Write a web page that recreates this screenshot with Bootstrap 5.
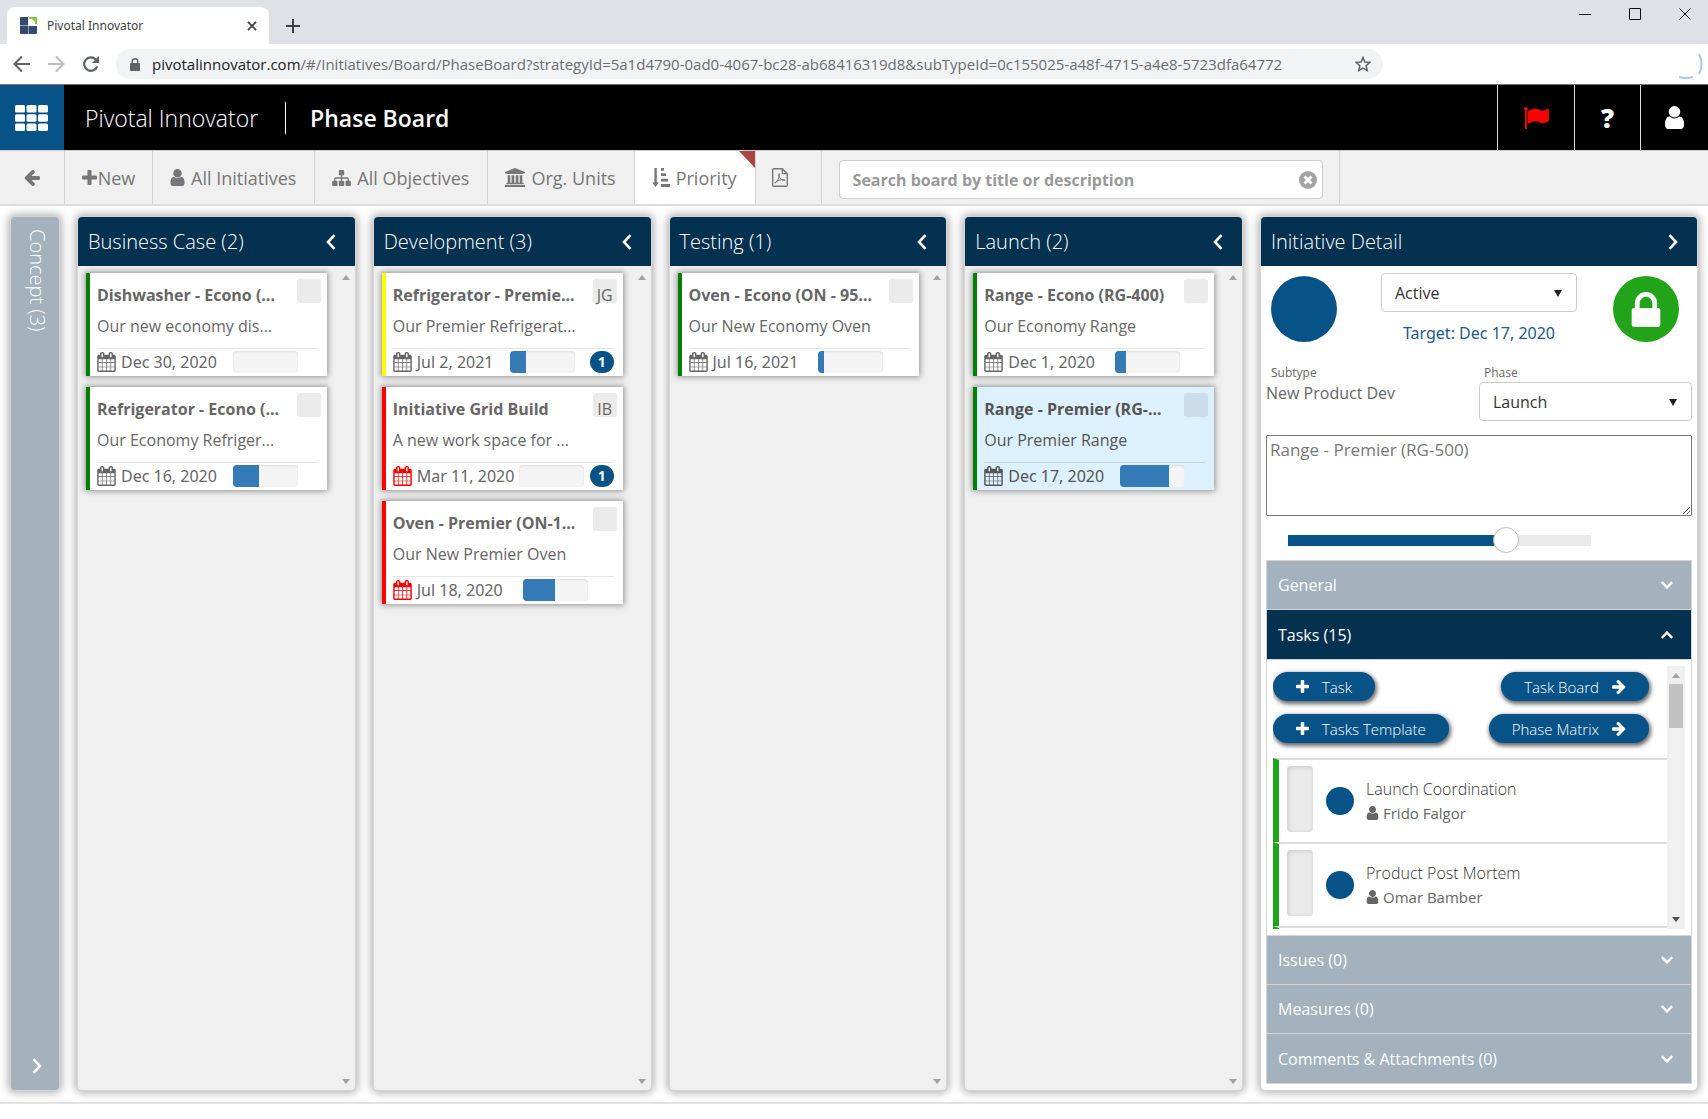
<!DOCTYPE html>
<html lang="en">
<head>
<meta charset="utf-8">
<meta name="viewport" content="width=device-width, initial-scale=1">
<title>Pivotal Innovator</title>
<link href="https://cdn.jsdelivr.net/npm/bootstrap@5.3.0/dist/css/bootstrap.min.css" rel="stylesheet">
<style>
:root { --navy: #053150; --blue: #075387; --slate: #a3b2bd; --ink: #666; --edge: #d4d4d4; }
body { font-family: "Open Sans", "Noto Sans", sans-serif; font-size: 16px; line-height: 22px; color: var(--ink); background: #fff; }
svg { display: block; flex: none; fill: currentColor; }
button { font: inherit; }
.plain-btn { border: 0; background: none; padding: 0; color: inherit; display: flex; align-items: center; justify-content: center; }

/* browser chrome */
.tab-strip { height: 44px; background: #dee1e6; color: #3c4043; }
.browser-tab { position: relative; width: 262px; height: 37px; margin: 7px 0 0 7px; padding: 0 12px 0 13px; background: #fff; border-radius: 8px 8px 0 0; font-family: "Noto Sans", sans-serif; font-size: 12px; gap: 10px; }
.new-tab { margin: 7px 0 0 17px; }
.window-buttons { gap: 38px; padding-right: 17px; height: 28px; color: #111; }
.address-row { height: 40px; padding: 0 5px 0 12px; color: #5f6368; gap: 16px; }
.address-pill { width: 1267px; height: 30px; border-radius: 15px; background: #f1f3f4; padding: 0 12px 0 14px; font-size: 15px; color: #6a6e73; gap: 12px; }
.address-pill b { font-weight: 400; color: #202124; }

/* app header */
.app-header { height: 66px; background: #000; color: #fff; border-top: 1px solid #777; }
.apps-btn { width: 64px; background: var(--blue); color: #fff; padding-right: 2px; }
.brand-name { font-size: 23px; font-weight: 300; padding-left: 21px; color: #fff; text-decoration: none; }
.brand-rule { width: 1px; height: 32px; background: #fff; margin: 0 24px 0 27px; }
.page-name { font-size: 23px; font-weight: 600; margin: 0; line-height: 32px; }
.head-btn { color: #fff; border-left: 1px solid #ddd; width: 66px; font-size: 26px; font-weight: 800; }
.head-btn.wide-btn { width: 77px; color: #f00; }
.head-btn.last-btn { width: 68px; }

/* toolbar */
.tool-row { height: 56px; background: #f0f0f0; border-top: 1px solid #ccc; border-bottom: 2px solid #ddd; color: #777; font-size: 18px; }
.tool-item { border-right: 1px solid #d2d2d2; gap: 6px; padding: 0 18px 0 17px; position: relative; }
.tool-item.back-item { width: 65px; }
.tool-item.new-item { width: 88px; gap: 1px; padding: 0 16px; }
.tool-item.on-item { background: #fff; }
.tool-item.on-item::after { content: ""; position: absolute; top: 0; right: 0; border-style: solid; border-width: 0 16px 17px 0; border-color: transparent #a94442 transparent transparent; }
.tool-item.pdf-item { width: 66px; padding: 0 32px 0 16px; }
.search-area { padding: 4px 16px 0 17px; border-right: 1px solid #d2d2d2; width: 518px; }
.search-area .form-control { height: 39px; border: 1px solid #ccc; border-radius: 4px; font-size: 16px; font-weight: 700; padding: 0 34px 0 13px; }
.search-area .form-control::placeholder { color: #999; opacity: 1; }
.clear-btn { position: absolute; right: 6px; top: 11px; color: #a3a3a3; }

/* board */
.board { padding: 10px 10px 11px; gap: 17px; border-bottom: 2px solid #e4e4e4; margin-bottom: 15px; }
.lane, .concept-lane, .detail-pane { border: 1px solid var(--edge); border-radius: 5px; box-shadow: 0 0 8px 2px rgba(0,0,0,.3); overflow: hidden; }
.lane { background: #f0f0f0; flex: 1 1 0; min-width: 0; }
.concept-lane { width: 50px; background: var(--slate); color: #fff; padding: 12px 0 16px 3px; }
.concept-lane h2 { writing-mode: vertical-rl; font-size: 20px; font-weight: 300; margin: 0; line-height: 24px; }
.pane-head { height: 49px; background: var(--navy); color: #fff; padding: 0 19px 0 10px; }
.pane-head h2 { font-size: 20px; font-weight: 300; margin: 0; line-height: 28px; }
.lane-body { padding: 7px 0 6px 8px; }
.lane-scroll { width: 18px; color: #a3a3a3; padding-top: 2px; }
.card-stack { gap: 11px; width: 241px; }
.idea { background: #fff; border-left: 4px solid #008000; height: 103px; padding: 6px 6px 0 7px; box-shadow: 0 0 6px 1px rgba(0,0,0,.4); }
.idea.late { border-left-color: #f00; }
.idea.warn { border-left-color: #ff0; }
.idea.late .due-icon { color: #f00; }
.idea.chosen { background: #ddf0fe; color: #555; }
.idea h3 { font-size: 16px; line-height: 32px; font-weight: 700; margin: 0; white-space: nowrap; }
.idea p { margin: -1px 0 6px; line-height: 32px; height: 32px; white-space: nowrap; }
.owner { width: 24px; height: 24px; border-radius: 2px; background: rgba(0,0,0,.08); line-height: 32px; text-align: center; }
.idea-foot { border-top: 1px solid rgba(0,0,0,.1); margin-right: 3px; padding-top: 1px; height: 25px; font-family: "Noto Sans", sans-serif; }
.due-text { margin: 0 16px 0 5px; }
.due-text.tight { margin-right: 5px; }
.due-text.loose { margin-right: 20px; }
.idea .progress { width: 65px; height: 22px; border-radius: 4px; background: #f4f4f4; box-shadow: inset 0 1px 2px rgba(0,0,0,.1); flex: none; --bs-progress-bar-bg: #337ab7; }
.count { width: 24px; height: 22px; border-radius: 12px; background: var(--blue); color: #fff; font-size: 14px; font-weight: 700; text-align: center; }

/* detail */
.detail-pane { width: 438px; background: #fff; }
.detail-body { padding: 6px 5px; }
.disc { width: 66px; height: 66px; border-radius: 50%; background: var(--blue); }
.disc.lock-disc { background: #21a31a; color: #fff; }
.status-row { padding: 0 13px 0 5px; }
.status-box { width: 204px; padding: 1px 0 0 8px; }
.detail-body .form-select { height: 39px; border: 1px solid #ccc; border-radius: 4px; font-size: 16px; color: #333; padding: 0 40px 0 13px; background-position: right 13px center; background-size: 10px 8px;
 --bs-form-select-bg-img: url("data:image/svg+xml,%3csvg xmlns='http://www.w3.org/2000/svg' viewBox='0 0 10 8'%3e%3cpath fill='%23222' d='M1 1h8L5 8z'/%3e%3c/svg%3e"); }
.target-link { color: #22598b; text-decoration: none; margin-top: 10px; font-family: "Noto Sans", sans-serif; }
.meta-row { padding-top: 20px; }
.meta-row .tiny { font-size: 12px; line-height: 18px; padding-left: 5px; display: block; }
.meta-row .phase-box { width: 213px; }
.subtype-text { line-height: 22px; display: block; }
.name-area { height: 81px; border: 1px solid #777; border-radius: 1px; color: #777; font-size: 17px; line-height: 24px; padding: 2px 3px; margin-top: 14px; width: 100%; display: block; resize: both; font-family: inherit; }
.pace { appearance: none; display: block; width: 303px; height: 26px; margin: 11px 0 7px 22px; background: transparent; }
.pace::-webkit-slider-runnable-track { height: 11px; background: linear-gradient(to right, var(--blue) 72%, #eaeaea 72%); }
.pace::-webkit-slider-thumb { appearance: none; width: 26px; height: 26px; margin-top: -8px; border-radius: 50%; background: #fff; border: 1px solid #bbb; }
.fold { border: 1px solid var(--edge); }
.fold-head { width: 100%; height: 49px; background: var(--slate); color: #fff; font-size: 16px; font-weight: 400; padding: 0 18px 0 11px; justify-content: space-between; border-bottom: 1px solid var(--edge); }
.fold-head:last-child { border-bottom: 0; }
.fold-head.open-head { background: var(--navy); height: 50px; }
.task-area { padding: 6px; flex: 1 1 0; min-height: 0; border-bottom: 1px solid var(--edge); }
.task-scroll { width: 18px; background: #f0f0f0; padding: 7px 0; }
.task-scroll .grip { width: 14px; height: 44px; background: #c1c1c1; margin-top: 6px; }
.task-main { overflow: hidden; }
.pill-row { padding: 0 18px 13px 0; }
.pill-row:first-child { padding-top: 6px; }
.pill { height: 29px; border-radius: 15px; background: var(--blue); color: #fff; font-size: 15px; font-weight: 300; padding: 0 23px; gap: 13px; box-shadow: 1px 2px 4px 1px rgba(0,0,0,.6); }
.task { height: 84px; border-top: 2px solid #ddd; border-left: 6px solid #1fa51a; padding-left: 8px; }
.task-list { margin-top: 2px; }
.task .gauge { width: 26px; height: 66px; border-radius: 4px; background: #ebebeb; box-shadow: inset 1px 1px 5px rgba(0,0,0,.15); margin-right: 13px; margin-bottom: 4px; }
.task .spot { width: 28px; height: 28px; border-radius: 50%; background: var(--blue); margin-right: 12px; }
.task .task-name { font-size: 16px; font-weight: 300; line-height: 24px; color: #333; }
.task .who { font-size: 15px; line-height: 24px; gap: 4px; }
</style>
<script src="https://cdn.jsdelivr.net/npm/bootstrap@5.3.0/dist/js/bootstrap.bundle.min.js" defer></script>
</head>
<body class="d-flex flex-column min-vh-100">
<svg width="0" height="0" class="position-absolute" aria-hidden="true">
  <symbol id="i-user" viewBox="256 128 1280 1536"><path d="M1536 1399q0 109-62.500 187t-150.500 78h-854q-88 0-150.500-78t-62.500-187q0-85 8.500-160.500t31.500-152 58.500-131 94-89 134.500-34.500q131 128 313 128t313-128q76 0 134.500 34.500t94 89 58.500 131 31.500 152 8.500 160.500zm-256-887q0 159-112.500 271.500t-271.500 112.500-271.500-112.500-112.500-271.500 112.500-271.500 271.500-112.500 271.500 112.500 112.500 271.500z"/></symbol>
  <symbol id="i-plus" viewBox="192 128 1408 1408"><path d="M1600 736v192q0 40-28 68t-68 28h-416v416q0 40-28 68t-68 28h-192q-40 0-68-28t-28-68v-416h-416q-40 0-68-28t-28-68v-192q0-40 28-68t68-28h416v-416q0-40 28-68t68-28h192q40 0 68 28t28 68v416h416q40 0 68 28t28 68z"/></symbol>
  <symbol id="i-left" viewBox="128 192 1536 1536"><path d="M1664 896v128q0 53-32.500 90.500t-84.500 37.500h-704l293 294q38 36 38 90t-38 90l-75 76q-37 37-90 37-52 0-91-37l-651-652q-37-37-37-90 0-52 37-91l651-650q38-38 91-38 52 0 90 38l75 74q38 38 38 91t-38 91l-293 293h704q52 0 84.500 37.500t32.500 90.500z"/></symbol>
  <symbol id="i-right" viewBox="128 192 1536 1536"><path transform="translate(1792 0) scale(-1 1)" d="M1664 896v128q0 53-32.500 90.500t-84.500 37.500h-704l293 294q38 36 38 90t-38 90l-75 76q-37 37-90 37-52 0-91-37l-651-652q-37-37-37-90 0-52 37-91l651-650q38-38 91-38 52 0 90 38l75 74q38 38 38 91t-38 91l-293 293h704q52 0 84.500 37.500t32.500 90.500z"/></symbol>
  <symbol id="i-flag" viewBox="64 128 1728 1536"><path d="M320 256q0 72-64 110v1266q0 13-9.500 22.500t-22.500 9.500h-64q-13 0-22.500-9.500t-9.500-22.500v-1266q-64-38-64-110 0-53 37.500-90.500t90.500-37.500 90.500 37.500 37.500 90.500zm1472 64v763q0 25-12.500 38.500t-39.500 27.500q-215 116-369 116-61 0-123.500-22t-108.500-48-115.500-48-142.500-22q-192 0-464 146-17 9-33 9-26 0-45-19t-19-45v-742q0-32 31-55 21-14 79-43 236-120 421-120 107 0 200 29t219 88q38 19 88 19 54 0 117.500-21t110-47 88-47 54.500-21q26 0 45 19t19 45z"/></symbol>
  <symbol id="i-lock" viewBox="320 128 1152 1408"><path d="M640 768h512v-192q0-106-75-181t-181-75-181 75-75 181v192zm832 96v576q0 40-28 68t-68 28h-960q-40 0-68-28t-28-68v-576q0-40 28-68t68-28h32v-192q0-184 132-316t316-132 316 132 132 316v192h32q40 0 68 28t28 68z"/></symbol>
  <symbol id="i-cal" viewBox="64 0 1664 1792"><path d="M192 1664h288v-288h-288v288zm352 0h320v-288h-320v288zm-352-352h288v-320h-288v320zm352 0h320v-320h-320v320zm-352-384h288v-288h-288v288zm736 736h320v-288h-320v288zm-384-736h320v-288h-320v288zm768 736h288v-288h-288v288zm-384-352h320v-320h-320v320zm-352-864v-288q0-13-9.500-22.500t-22.500-9.500h-64q-13 0-22.500 9.500t-9.500 22.500v288q0 13 9.500 22.500t22.500 9.500h64q13 0 22.500-9.500t9.500-22.500zm736 864h288v-320h-288v320zm-384-384h320v-288h-320v288zm384 0h288v-288h-288v288zm32-480v-288q0-13-9.500-22.500t-22.500-9.500h-64q-13 0-22.500 9.500t-9.500 22.500v288q0 13 9.500 22.500t22.500 9.500h64q13 0 22.500-9.500t9.500-22.500zm384-64v1280q0 52-38 90t-90 38h-1408q-52 0-90-38t-38-90v-1280q0-52 38-90t90-38h128v-96q0-66 47-113t113-47h64q66 0 113 47t47 113v96h384v-96q0-66 47-113t113-47h64q66 0 113 47t47 113v96h128q52 0 90 38t38 90z"/></symbol>
  <symbol id="i-map" viewBox="0 128 1792 1536"><path d="M1792 1248v320q0 40-28 68t-68 28h-320q-40 0-68-28t-28-68v-320q0-40 28-68t68-28h96v-192h-512v192h96q40 0 68 28t28 68v320q0 40-28 68t-68 28h-320q-40 0-68-28t-28-68v-320q0-40 28-68t68-28h96v-192h-512v192h96q40 0 68 28t28 68v320q0 40-28 68t-68 28h-320q-40 0-68-28t-28-68v-320q0-40 28-68t68-28h96v-192q0-52 38-90t90-38h512v-192h-96q-40 0-68-28t-28-68v-320q0-40 28-68t68-28h320q40 0 68 28t28 68v320q0 40-28 68t-68 28h-96v192h512q52 0 90 38t38 90v192h96q40 0 68 28t28 68z"/></symbol>
  <symbol id="i-bank" viewBox="0 0 20 19"><path d="M10 0l10 4v1.300h-1.300q0 .8-.8.800H2.100q-.8 0-.8-.8H0V4zM2.700 7.200h2.600v7.600h1.300V7.200h2.700v7.600h1.400V7.200h2.700v7.600h1.300V7.200h2.600v7.600h.6q.8 0 .8.700v.6H1.300v-.6q0-.7.800-.7h.6zM.8 16.800h18.400q.8 0 .8.700V19H0v-1.500q0-.7.800-.7z"/></symbol>
  <symbol id="i-sort" viewBox="0 0 18 19"><path d="M2.400 0h2.400v14.500h2.200L3.600 19 .2 14.500h2.200zM9 0h3v2.800H9zM9 5.300h5v2.800H9zM9 10.700h7v2.800H9zM9 16.100h9v2.800H9z"/></symbol>
  <symbol id="i-pdf" viewBox="0 0 16 19"><path fill="none" stroke="currentColor" stroke-width="1.400" d="M1.700.7h8.600l5 5v11.600q0 1-1 1H1.700q-1 0-1-1V1.700q0-1 1-1zM10.300.9v3.900q0 .8.800.8h4"/><path fill="none" stroke="currentColor" stroke-width="1" d="M3 15.300c1.500-.6 4.500-5.500 4.500-8.800 0-1.300-1-1.300-.8.300.3 2.500 2.300 5.300 5.300 5.700 1.600.2 1.200-1-.6-1-2.700 0-5.300 1-7 2-1.200.8-1.700 1.600-1.400 1.800z"/></symbol>
  <symbol id="i-prev" viewBox="0 0 10 16"><path fill="none" stroke="currentColor" stroke-width="2.600" d="M8.500 1.200L2 8l6.500 6.800"/></symbol>
  <symbol id="i-next" viewBox="0 0 10 16"><path fill="none" stroke="currentColor" stroke-width="2.600" d="M1.500 1.200L8 8l-6.500 6.800"/></symbol>
  <symbol id="i-down" viewBox="0 0 12 8"><path fill="none" stroke="currentColor" stroke-width="2.400" d="M.8 1.200L6 6.400l5.200-5.200"/></symbol>
  <symbol id="i-up" viewBox="0 0 12 8"><path fill="none" stroke="currentColor" stroke-width="2.400" d="M.8 6.800L6 1.600l5.200 5.200"/></symbol>
  <symbol id="i-su" viewBox="0 0 8 5"><path d="M0 5h8L4 0z"/></symbol>
  <symbol id="i-sd" viewBox="0 0 8 5"><path d="M0 0h8L4 5z"/></symbol>
</svg>

<div class="tab-strip d-flex">
  <div class="browser-tab d-flex align-items-center">
    <svg width="17" height="17" viewBox="0 0 17 17"><path fill="#35496f" d="M1 0h7v8.500H0V1q0-1 1-1zM0 9h8.500v8H1q-1 0-1-1zM9 9h8v7q0 1-1 1H9z"/><path fill="#76cc35" d="M9 0h7q1 0 1 1v6h-2q.5-5-6-5.500z"/></svg>
    <span>Pivotal Innovator</span>
    <button class="plain-btn ms-auto" aria-label="Close tab"><svg width="10" height="10" viewBox="0 0 11 11"><path stroke="#3c4043" stroke-width="1.800" d="M1 1l9 9M10 1l-9 9"/></svg></button>
  </div>
  <button class="plain-btn new-tab" aria-label="New tab"><svg width="14" height="14" viewBox="0 0 14 14"><path stroke="#3c4043" stroke-width="2" d="M7 0v14M0 7h14"/></svg></button>
  <div class="window-buttons d-flex align-items-center ms-auto">
    <button class="plain-btn" aria-label="Minimize"><svg width="12" height="12" viewBox="0 0 12 12"><path stroke="currentColor" d="M0 6.500h12"/></svg></button>
    <button class="plain-btn" aria-label="Maximize"><svg width="12" height="12" viewBox="0 0 12 12"><path fill="none" stroke="currentColor" d="M.5.5h11v11H.5z"/></svg></button>
    <button class="plain-btn" aria-label="Close"><svg width="12" height="12" viewBox="0 0 12 12"><path stroke="currentColor" d="M.5.5l11 11M11.500.5l-11 11"/></svg></button>
  </div>
</div>
<div class="address-row d-flex align-items-center">
  <button class="plain-btn" aria-label="Back"><svg width="19" height="18" viewBox="0 0 19 18"><path fill="none" stroke="#5f6368" stroke-width="2" d="M18 9H3M10 1.500L2.500 9l7.500 7.500"/></svg></button>
  <button class="plain-btn" aria-label="Forward"><svg width="19" height="18" viewBox="0 0 19 18"><path fill="none" stroke="#bcbec1" stroke-width="2" d="M1 9h15M9 1.500L16.500 9 9 16.500"/></svg></button>
  <button class="plain-btn" aria-label="Reload"><svg width="18" height="18" viewBox="0 0 18 18"><path fill="none" stroke="#5f6368" stroke-width="2.200" d="M15.200 11.300A6.700 6.700 0 1 1 13.500 4.200L15 5.700"/><path fill="#5f6368" d="M17 1v7h-7z"/></svg></button>
  <div class="address-pill d-flex align-items-center">
    <svg width="10" height="13" viewBox="0 0 10 13"><path fill="#5f6368" d="M1 5h8q1 0 1 1v6q0 1-1 1H1q-1 0-1-1V6q0-1 1-1z"/><path fill="none" stroke="#5f6368" stroke-width="1.400" d="M2.200 5.500V3.300a2.800 2.600 0 0 1 5.600 0v2.200"/></svg>
    <span class="text-nowrap"><b>pivotalinnovator.com</b>/#/Initiatives/Board/PhaseBoard?strategyId=5a1d4790-0ad0-4067-bc28-ab68416319d8&amp;subTypeId=0c155025-a48f-4715-a4e8-5723dfa64772</span>
    <button class="plain-btn ms-auto" aria-label="Bookmark"><svg width="16" height="16" viewBox="0 0 16 16"><path fill="none" stroke="#5f6368" stroke-width="1.500" d="M8 1.500l1.900 4.600 4.900.4-3.700 3.200 1.100 4.800L8 12l-4.200 2.500 1.100-4.800L1.200 6.500l4.900-.4z"/></svg></button>
  </div>
  <svg class="ms-auto" width="26" height="32" viewBox="0 0 26 32"><path fill="none" stroke="#a8c7fa" stroke-width="2" d="M22 6q5 10 0 20M2 29q7 2 14 0"/></svg>
</div>

<header class="app-header d-flex align-items-stretch">
  <button class="plain-btn apps-btn" aria-label="Apps"><svg width="33" height="26" viewBox="0 0 33 26"><g><rect width="10" height="7.500" rx="1.500"/><rect x="11.500" width="10" height="7.500" rx="1.500"/><rect x="23" width="10" height="7.500" rx="1.500"/><rect y="9.200" width="10" height="7.500" rx="1.500"/><rect x="11.500" y="9.200" width="10" height="7.500" rx="1.500"/><rect x="23" y="9.200" width="10" height="7.500" rx="1.500"/><rect y="18.500" width="10" height="7.500" rx="1.500"/><rect x="11.500" y="18.500" width="10" height="7.500" rx="1.500"/><rect x="23" y="18.500" width="10" height="7.500" rx="1.500"/></g></svg></button>
  <div class="d-flex align-items-center">
    <a class="brand-name" href="#">Pivotal Innovator</a><span class="brand-rule"></span><h1 class="page-name">Phase Board</h1>
  </div>
  <nav class="d-flex ms-auto" aria-label="Account">
    <button class="plain-btn head-btn wide-btn" aria-label="Flags"><svg width="25" height="22"><use href="#i-flag"/></svg></button>
    <button class="plain-btn head-btn" aria-label="Help">?</button>
    <button class="plain-btn head-btn last-btn" aria-label="User"><svg width="21" height="23"><use href="#i-user"/></svg></button>
  </nav>
</header>

<div class="tool-row d-flex align-items-stretch">
  <button class="plain-btn rounded-0 tool-item back-item" aria-label="Go back"><svg width="16" height="16"><use href="#i-left"/></svg></button>
  <button class="plain-btn tool-item new-item"><svg width="15" height="15"><use href="#i-plus"/></svg>New</button>
  <button class="plain-btn tool-item"><svg width="15" height="17"><use href="#i-user"/></svg>All Initiatives</button>
  <button class="plain-btn tool-item"><svg width="19" height="16"><use href="#i-map"/></svg>All Objectives</button>
  <button class="plain-btn tool-item"><svg width="20" height="19"><use href="#i-bank"/></svg>Org. Units</button>
  <button class="plain-btn tool-item on-item"><svg width="18" height="19"><use href="#i-sort"/></svg>Priority</button>
  <button class="plain-btn tool-item pdf-item" aria-label="Export PDF"><svg width="16" height="19"><use href="#i-pdf"/></svg></button>
  <div class="search-area d-flex align-items-center">
    <div class="position-relative w-100">
      <input class="form-control" type="text" aria-label="Search board" placeholder="Search board by title or description">
      <button class="plain-btn clear-btn" aria-label="Clear"><svg width="18" height="18" viewBox="0 0 18 18"><circle cx="9" cy="9" r="9"/><path stroke="#fff" stroke-width="3" d="M5.500 5.500l7 7M12.500 5.500l-7 7"/></svg></button>
    </div>
  </div>
</div>

<main class="board d-flex flex-grow-1 align-items-stretch">
  <section class="concept-lane d-flex flex-column align-items-center justify-content-between">
    <h2>Concept (3)</h2>
    <button class="plain-btn" aria-label="Expand"><svg width="10" height="16"><use href="#i-next"/></svg></button>
  </section>

  <section class="lane d-flex flex-column">
    <div class="pane-head d-flex align-items-center justify-content-between"><h2>Business Case (2)</h2><button class="plain-btn" aria-label="Collapse"><svg width="10" height="16"><use href="#i-prev"/></svg></button></div>
    <div class="lane-body d-flex flex-grow-1 justify-content-between">
      <div class="card-stack d-flex flex-column">
        <article class="idea"><div class="d-flex justify-content-between"><h3>Dishwasher - Econo (...</h3><span class="owner"></span></div><p>Our new economy dis...</p>
          <div class="idea-foot d-flex align-items-center"><svg class="due-icon" width="19" height="20"><use href="#i-cal"/></svg><span class="due-text">Dec 30, 2020</span><div class="progress"><div class="progress-bar" style="width:0%"></div></div></div></article>
        <article class="idea"><div class="d-flex justify-content-between"><h3>Refrigerator - Econo (...</h3><span class="owner"></span></div><p>Our Economy Refriger...</p>
          <div class="idea-foot d-flex align-items-center"><svg class="due-icon" width="19" height="20"><use href="#i-cal"/></svg><span class="due-text">Dec 16, 2020</span><div class="progress"><div class="progress-bar" style="width:40%"></div></div></div></article>
      </div>
      <div class="lane-scroll d-flex flex-column justify-content-between align-items-center"><svg width="8" height="5"><use href="#i-su"/></svg><svg width="8" height="5"><use href="#i-sd"/></svg></div>
    </div>
  </section>

  <section class="lane d-flex flex-column">
    <div class="pane-head d-flex align-items-center justify-content-between"><h2>Development (3)</h2><button class="plain-btn" aria-label="Collapse"><svg width="10" height="16"><use href="#i-prev"/></svg></button></div>
    <div class="lane-body d-flex flex-grow-1 justify-content-between">
      <div class="card-stack d-flex flex-column">
        <article class="idea warn"><div class="d-flex justify-content-between"><h3>Refrigerator - Premie...</h3><span class="owner">JG</span></div><p>Our Premier Refrigerat...</p>
          <div class="idea-foot d-flex align-items-center"><svg class="due-icon" width="19" height="20"><use href="#i-cal"/></svg><span class="due-text">Jul 2, 2021</span><div class="progress"><div class="progress-bar" style="width:26%"></div></div><span class="count ms-auto">1</span></div></article>
        <article class="idea late"><div class="d-flex justify-content-between"><h3>Initiative Grid Build</h3><span class="owner">IB</span></div><p>A new work space for ...</p>
          <div class="idea-foot d-flex align-items-center"><svg class="due-icon" width="19" height="20"><use href="#i-cal"/></svg><span class="due-text tight">Mar 11, 2020</span><div class="progress"><div class="progress-bar" style="width:0%"></div></div><span class="count ms-auto">1</span></div></article>
        <article class="idea late"><div class="d-flex justify-content-between"><h3>Oven - Premier (ON-1...</h3><span class="owner"></span></div><p>Our New Premier Oven</p>
          <div class="idea-foot d-flex align-items-center"><svg class="due-icon" width="19" height="20"><use href="#i-cal"/></svg><span class="due-text loose">Jul 18, 2020</span><div class="progress"><div class="progress-bar" style="width:49%"></div></div></div></article>
      </div>
      <div class="lane-scroll d-flex flex-column justify-content-between align-items-center"><svg width="8" height="5"><use href="#i-su"/></svg><svg width="8" height="5"><use href="#i-sd"/></svg></div>
    </div>
  </section>

  <section class="lane d-flex flex-column">
    <div class="pane-head d-flex align-items-center justify-content-between"><h2>Testing (1)</h2><button class="plain-btn" aria-label="Collapse"><svg width="10" height="16"><use href="#i-prev"/></svg></button></div>
    <div class="lane-body d-flex flex-grow-1 justify-content-between">
      <div class="card-stack d-flex flex-column">
        <article class="idea"><div class="d-flex justify-content-between"><h3>Oven - Econo (ON - 95...</h3><span class="owner"></span></div><p>Our New Economy Oven</p>
          <div class="idea-foot d-flex align-items-center"><svg class="due-icon" width="19" height="20"><use href="#i-cal"/></svg><span class="due-text loose">Jul 16, 2021</span><div class="progress"><div class="progress-bar" style="width:9%"></div></div></div></article>
      </div>
      <div class="lane-scroll d-flex flex-column justify-content-between align-items-center"><svg width="8" height="5"><use href="#i-su"/></svg><svg width="8" height="5"><use href="#i-sd"/></svg></div>
    </div>
  </section>

  <section class="lane d-flex flex-column">
    <div class="pane-head d-flex align-items-center justify-content-between"><h2>Launch (2)</h2><button class="plain-btn" aria-label="Collapse"><svg width="10" height="16"><use href="#i-prev"/></svg></button></div>
    <div class="lane-body d-flex flex-grow-1 justify-content-between">
      <div class="card-stack d-flex flex-column">
        <article class="idea"><div class="d-flex justify-content-between"><h3>Range - Econo (RG-400)</h3><span class="owner"></span></div><p>Our Economy Range</p>
          <div class="idea-foot d-flex align-items-center"><svg class="due-icon" width="19" height="20"><use href="#i-cal"/></svg><span class="due-text loose">Dec 1, 2020</span><div class="progress"><div class="progress-bar" style="width:17%"></div></div></div></article>
        <article class="idea chosen"><div class="d-flex justify-content-between"><h3>Range - Premier (RG-...</h3><span class="owner"></span></div><p>Our Premier Range</p>
          <div class="idea-foot d-flex align-items-center"><svg class="due-icon" width="19" height="20"><use href="#i-cal"/></svg><span class="due-text">Dec 17, 2020</span><div class="progress"><div class="progress-bar" style="width:75%"></div></div></div></article>
      </div>
      <div class="lane-scroll d-flex flex-column justify-content-between align-items-center"><svg width="8" height="5"><use href="#i-su"/></svg><svg width="8" height="5"><use href="#i-sd"/></svg></div>
    </div>
  </section>

  <aside class="detail-pane d-flex flex-column">
    <div class="pane-head d-flex align-items-center justify-content-between"><h2>Initiative Detail</h2><button class="plain-btn" aria-label="Close detail"><svg width="10" height="16"><use href="#i-next"/></svg></button></div>
    <div class="detail-body d-flex flex-column flex-grow-1">
      <div class="status-row d-flex justify-content-between">
        <div class="disc mt-1"></div>
        <div class="status-box d-flex flex-column align-items-center">
          <select class="form-select" aria-label="Status"><option>Active</option></select>
          <a class="target-link" href="#">Target: Dec 17, 2020</a>
        </div>
        <button class="plain-btn disc lock-disc mt-1" aria-label="Locked"><svg width="30" height="35"><use href="#i-lock"/></svg></button>
      </div>
      <div class="meta-row d-flex justify-content-between">
        <div><span class="tiny">Subtype</span><span class="subtype-text">New Product Dev</span></div>
        <div class="phase-box"><label class="tiny" for="phase">Phase</label><select class="form-select" id="phase"><option>Launch</option></select></div>
      </div>
      <textarea class="name-area" aria-label="Name">Range - Premier (RG-500)</textarea>
      <input class="pace" type="range" min="0" max="100" value="74" aria-label="Progress">
      <div class="fold d-flex flex-column flex-grow-1">
        <button class="plain-btn fold-head">General<svg width="12" height="8"><use href="#i-down"/></svg></button>
        <button class="plain-btn fold-head open-head">Tasks (15)<svg width="12" height="8"><use href="#i-up"/></svg></button>
        <div class="task-area d-flex">
          <div class="task-main flex-grow-1">
            <div class="pill-row d-flex justify-content-between"><button class="plain-btn pill"><svg width="13" height="13"><use href="#i-plus"/></svg>Task</button><button class="plain-btn pill">Task Board<svg width="14" height="14"><use href="#i-right"/></svg></button></div>
            <div class="pill-row d-flex justify-content-between"><button class="plain-btn pill"><svg width="13" height="13"><use href="#i-plus"/></svg>Tasks Template</button><button class="plain-btn pill">Phase Matrix<svg width="14" height="14"><use href="#i-right"/></svg></button></div>
            <div class="task-list">
              <div class="task d-flex align-items-center"><span class="gauge"></span><span class="spot"></span><div><div class="task-name">Launch Coordination</div><div class="who d-flex align-items-center"><svg width="13" height="14"><use href="#i-user"/></svg>Frido Falgor</div></div></div>
              <div class="task d-flex align-items-center"><span class="gauge"></span><span class="spot"></span><div><div class="task-name">Product Post Mortem</div><div class="who d-flex align-items-center"><svg width="13" height="14"><use href="#i-user"/></svg>Omar Bamber</div></div></div>
              <div class="task"></div>
            </div>
          </div>
          <div class="task-scroll d-flex flex-column align-items-center"><svg width="8" height="5" color="#a3a3a3"><use href="#i-su"/></svg><span class="grip"></span><svg class="mt-auto" width="8" height="5" color="#505050"><use href="#i-sd"/></svg></div>
        </div>
        <button class="plain-btn fold-head">Issues (0)<svg width="12" height="8"><use href="#i-down"/></svg></button>
        <button class="plain-btn fold-head">Measures (0)<svg width="12" height="8"><use href="#i-down"/></svg></button>
        <button class="plain-btn fold-head">Comments &amp; Attachments (0)<svg width="12" height="8"><use href="#i-down"/></svg></button>
      </div>
    </div>
  </aside>
</main>
</body>
</html>
